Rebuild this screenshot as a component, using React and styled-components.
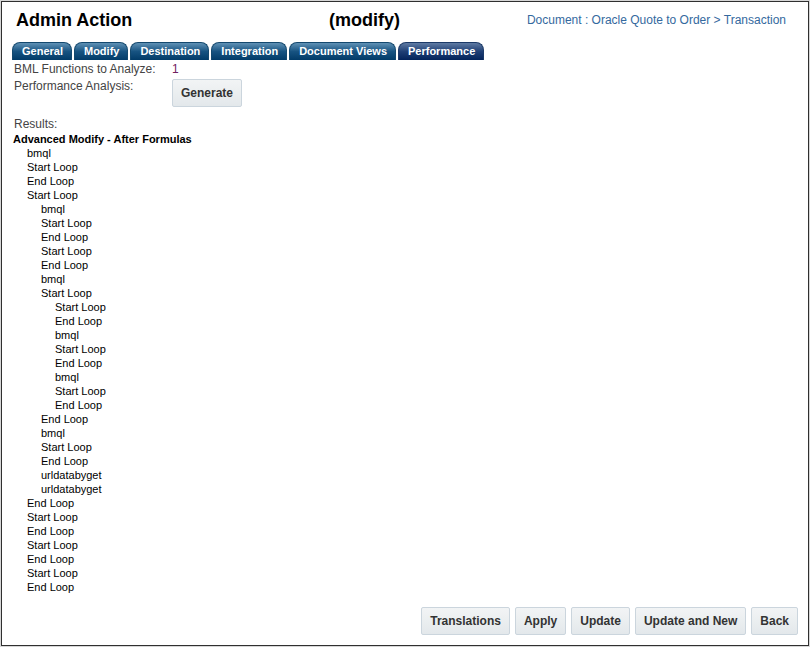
import React from "react";
import styled, { createGlobalStyle } from "styled-components";

const GlobalStyle = createGlobalStyle`
  * {
    box-sizing: border-box;
  }
  body {
    margin: 0;
    background-color: #ffffff;
    font-family: Arial, "Liberation Sans", sans-serif;
  }
`;

const Page = styled.div`
  min-height: 100vh;
  padding: 1px;
  background-color: #d6d6d6;
  display: flex;
`;

const Frame = styled.main`
  flex: 1;
  border: 1px solid #2f2f2f;
  background-color: #ffffff;
  padding: 6px 10px 10px;
  display: flex;
  flex-direction: column;
`;

const Header = styled.header`
  display: grid;
  grid-template-columns: 40% auto 1fr;
  column-gap: 5px;
  align-items: center;
  padding: 0 12px 0 4px;
  height: 24px;
`;

const Title = styled.h1`
  margin: 0;
  font-size: 18px;
  line-height: 24px;
  color: #000000;
`;

const ActionName = styled.span`
  font-size: 18px;
  font-weight: bold;
  line-height: 24px;
  color: #000000;
`;

const Breadcrumb = styled.a`
  justify-self: end;
  font-size: 12px;
  line-height: 24px;
  color: #34699e;
  text-decoration: none;
`;

const Tabs = styled.nav`
  display: flex;
  gap: 2px;
  margin-top: 10px;
`;

const Tab = styled.button`
  height: 18px;
  padding: 0 8px 0 9px;
  border: 1px solid ${props => (props.$active ? "#1c3a68" : "#14496f")};
  border-bottom: 0;
  border-radius: 8px 8px 0 0;
  background: ${props =>
    props.$active
      ? "linear-gradient(#5f7ba3, #1f3f75 50%, #03235a)"
      : "linear-gradient(#5f91b5, #175381 50%, #023b68)"};
  color: #ffffff;
  font-family: inherit;
  font-size: 11px;
  font-weight: bold;
  line-height: 15px;
  white-space: nowrap;
`;

const Fields = styled.div`
  display: grid;
  grid-template-columns: 158px 1fr;
  row-gap: 2px;
  padding: 2px 2px 0;
  font-size: 12px;
  line-height: 15px;
  color: #444444;
`;

const Value = styled.output`
  color: #702060;
`;

const Button = styled.button`
  height: 28px;
  padding: 0 8px;
  border: 1px solid #cbd5dd;
  border-radius: 2px;
  background: linear-gradient(#f2f4f5, #e3e8eb);
  color: #333333;
  font-family: inherit;
  font-size: 12px;
  font-weight: bold;
  white-space: nowrap;
`;

const FieldAction = styled.div`
  height: 28px;
`;

const ResultsLabel = styled.div`
  margin-top: 10px;
  padding-left: 2px;
  font-size: 12px;
  line-height: 15px;
  color: #444444;
`;

const Results = styled.section`
  padding: 0 0 12px 1px;
  font-size: 11px;
  line-height: 14px;
  color: #000000;
`;

const ResultsTitle = styled.h2`
  margin: 0;
  font-size: 11px;
  line-height: 14px;
`;

const List = styled.ul`
  margin: 0;
  padding-left: 14px;
  list-style: none;
`;

const Footer = styled.footer`
  display: flex;
  justify-content: flex-end;
  gap: 5px;
  margin-top: auto;
`;

const tabs = [
  "General",
  "Modify",
  "Destination",
  "Integration",
  "Document Views",
  "Performance"
];

const actions = ["Translations", "Apply", "Update", "Update and New", "Back"];

// a nested array holds the steps that run inside the preceding loop
const steps = [
  "bmql",
  "Start Loop",
  "End Loop",
  "Start Loop",
  [
    "bmql",
    "Start Loop",
    "End Loop",
    "Start Loop",
    "End Loop",
    "bmql",
    "Start Loop",
    [
      "Start Loop",
      "End Loop",
      "bmql",
      "Start Loop",
      "End Loop",
      "bmql",
      "Start Loop",
      "End Loop"
    ],
    "End Loop",
    "bmql",
    "Start Loop",
    "End Loop",
    "urldatabyget",
    "urldatabyget"
  ],
  "End Loop",
  "Start Loop",
  "End Loop",
  "Start Loop",
  "End Loop",
  "Start Loop",
  "End Loop"
];

const StepList = ({ items }) => (
  <List>
    {items.map((item, index) => (
      <li key={index}>
        {Array.isArray(item) ? <StepList items={item} /> : item}
      </li>
    ))}
  </List>
);

export default () => {
  const [active, setActive] = React.useState("Performance");

  return (
    <Page>
      <GlobalStyle />
      <Frame>
        <Header>
          <Title>Admin Action</Title>
          <ActionName>(modify)</ActionName>
          <Breadcrumb href="#document">
            Document : Oracle Quote to Order &gt; Transaction
          </Breadcrumb>
        </Header>
        <Tabs>
          {tabs.map(tab => (
            <Tab
              key={tab}
              type="button"
              $active={tab === active}
              onClick={() => setActive(tab)}
            >
              {tab}
            </Tab>
          ))}
        </Tabs>
        <Fields>
          <label htmlFor="functions">BML Functions to Analyze:</label>
          <Value id="functions">1</Value>
          <label htmlFor="generate">Performance Analysis:</label>
          <FieldAction>
            <Button id="generate" type="button">
              Generate
            </Button>
          </FieldAction>
        </Fields>
        <ResultsLabel>Results:</ResultsLabel>
        <Results>
          <ResultsTitle>Advanced Modify - After Formulas</ResultsTitle>
          <StepList items={steps} />
        </Results>
        <Footer>
          {actions.map(action => (
            <Button key={action} type="button">
              {action}
            </Button>
          ))}
        </Footer>
      </Frame>
    </Page>
  );
};
